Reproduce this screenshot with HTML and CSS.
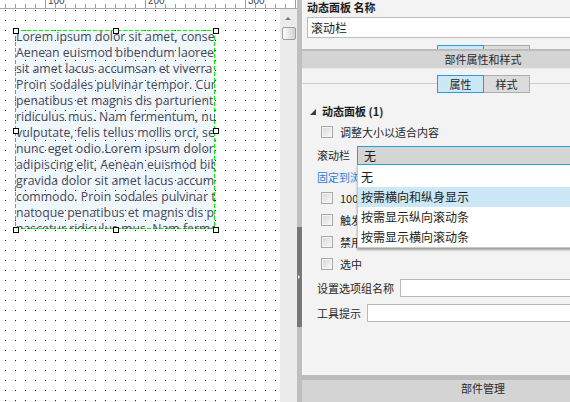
FILE: index.html
```html
<!DOCTYPE html>
<html lang="zh-CN">
<head>
<meta charset="utf-8">
<title>动态面板</title>
<link rel="stylesheet" href="styles.css">
</head>
<body>
<div class="app">
  <div class="design">
    <svg class="ruler" width="297" height="9" viewBox="0 0 297 9">
      <rect width="297" height="9" fill="#fff"/>
      <path d="M0 8.5H297" stroke="#a9a9a9"/>
      <path d="M5.5 4V8M15.5 4V8M25.5 4V8M35.5 4V8M55.5 4V8M65.5 4V8M75.5 4V8M85.5 4V8M95.5 4V8M105.5 4V8M115.5 4V8M125.5 4V8M135.5 4V8M155.5 4V8M165.5 4V8M175.5 4V8M185.5 4V8M195.5 4V8M205.5 4V8M215.5 4V8M225.5 4V8M235.5 4V8M255.5 4V8M265.5 4V8M275.5 4V8M285.5 4V8M295.5 0V8" stroke="#9d9d9d"/>
      <path d="M45.5 0V8M145.5 0V8M245.5 0V8" stroke="#9d9d9d"/>
      <text x="48" y="4" class="ruler-num">100</text>
      <text x="148" y="4" class="ruler-num">200</text>
      <text x="248" y="4" class="ruler-num">300</text>
    </svg>
    <div class="design-main">
      <div class="canvas">
        <div class="widget">
          <div class="widget-text">
            <div class="line">Lorem ipsum dolor sit amet, consectetur adipiscing elit.</div>
            <div class="line">Aenean euismod bibendum laoreet. Proin gravida dolor</div>
            <div class="line">sit amet lacus accumsan et viverra justo commodo.</div>
            <div class="line">Proin sodales pulvinar tempor. Cum sociis natoque</div>
            <div class="line">penatibus et magnis dis parturient montes, nascetur</div>
            <div class="line">ridiculus mus. Nam fermentum, nulla luctus pharetra</div>
            <div class="line">vulputate, felis tellus mollis orci, sed rhoncus sapien,</div>
            <div class="line">nunc eget odio.Lorem ipsum dolor sit amet, consectetur</div>
            <div class="line">adipiscing elit, Aenean euismod bibendum laoreet. Proin</div>
            <div class="line">gravida dolor sit amet lacus accumsan et viverra justo</div>
            <div class="line">commodo. Proin sodales pulvinar tempor. Cum sociis</div>
            <div class="line">natoque penatibus et magnis dis parturient montes,</div>
            <div class="line">nascetur ridiculus mus. Nam fermentum, nulla luctus</div>
          </div>
          <span class="handle hx0 hy0"></span>
          <span class="handle hx1 hy0"></span>
          <span class="handle hx2 hy0"></span>
          <span class="handle hx0 hy1"></span>
          <span class="handle hx2 hy1"></span>
          <span class="handle hx0 hy2"></span>
          <span class="handle hx1 hy2"></span>
          <span class="handle hx2 hy2"></span>
        </div>
      </div>
      <div class="vscroll">
        <span class="vs-up"></span>
        <span class="vs-thumb"></span>
      </div>
    </div>
  </div>
  <div class="splitter"><span class="sp-grip"></span></div>
  <div class="panel">
    <div class="panel-top">
      <div class="name-label">动态面板 名称</div>
      <div class="name-input">滚动栏</div>
      <div class="ghost-tabs"><span class="gtab gtab-on"></span><span class="gtab"></span></div>
    </div>
    <div class="bar-sep"></div>
    <div class="bar">部件属性和样式</div>
    <div class="panel-body">
      <div class="tabs"><span class="tab tab-on">属性</span><span class="tab">样式</span></div>
      <div class="sec-head">
        <svg class="tri" width="6" height="6" viewBox="0 0 6 6"><polygon points="6,0 6,6 0,6" fill="#3c3c3c"/></svg>
        <span>动态面板 (1)</span>
      </div>
      <div class="cb-row"><span class="cb"></span><span>调整大小以适合内容</span></div>
      <div class="field-row scroll-row">
        <span class="lbl">滚动栏</span>
        <div class="select-wrap">
          <div class="select">无</div>
          <ul class="dropdown">
            <li>无</li>
            <li class="hl">按需横向和纵身显示</li>
            <li>按需显示纵向滚动条</li>
            <li>按需显示横向滚动条</li>
          </ul>
        </div>
      </div>
      <div class="link-row"><span class="link">固定到浏览器</span></div>
      <div class="cb-row"><span class="cb"></span><span>100%宽度(仅限浏览器中有效)</span></div>
      <div class="cb-row"><span class="cb"></span><span>触发鼠标交互样式</span></div>
      <div class="cb-row"><span class="cb"></span><span>禁用</span></div>
      <div class="cb-row"><span class="cb"></span><span>选中</span></div>
      <div class="field-row group-row"><span class="lbl">设置选项组名称</span><span class="input"></span></div>
      <div class="field-row tip-row"><span class="lbl">工具提示</span><span class="input"></span></div>
    </div>
    <div class="bar-sep bottom-sep"></div>
    <div class="bar bottom-bar">部件管理</div>
  </div>
</div>
</body>
</html>
```

FILE: styles.css
```css
* { box-sizing: border-box; }
html, body { margin: 0; padding: 0; }
body {
  width: 570px;
  height: 402px;
  overflow: hidden;
  background: #fff;
  font-family: "Noto Sans CJK SC", "Noto Sans", sans-serif;
  font-size: 11px;
  color: #262626;
}
.app { display: flex; width: 570px; height: 402px; }

/* design area */
.design { flex: 0 0 297px; display: flex; flex-direction: column; }
.ruler { display: block; flex: 0 0 9px; }
.ruler-num { font-family: "Liberation Sans", sans-serif; font-size: 10px; fill: #444; }
.design-main { flex: 1; display: flex; min-height: 0; }
.canvas {
  flex: 0 0 280px;
  overflow: hidden;
  background-color: #fff;
  background-image: conic-gradient(from 270deg at 1px 1px, #0000ff 90deg, transparent 0deg);
  background-size: 10px 10px;
  background-position: 5px 1px;
  padding: 21px 0 0 15px;
}
.widget {
  position: relative;
  width: 200px;
  height: 199px;
  background:
    repeating-linear-gradient(90deg, #00f000 0 4px, transparent 4px 6px) 0 0 / 100% 1px no-repeat,
    repeating-linear-gradient(90deg, #00f000 0 4px, transparent 4px 6px) 0 100% / 100% 1px no-repeat,
    repeating-linear-gradient(180deg, #00f000 0 4px, transparent 4px 6px) 0 0 / 1px 100% no-repeat,
    repeating-linear-gradient(180deg, #00f000 0 4px, transparent 4px 6px) 100% 0 / 1px 100% no-repeat,
    rgba(100, 180, 210, 0.1);
}
.widget-text {
  height: 100%;
  overflow: hidden;
  padding-left: 1px;
  font-family: "Open Sans", "Noto Sans", sans-serif;
  font-size: 12.3px;
  line-height: 16px;
  color: #48485a;
}
.widget-text .line { white-space: nowrap; }
.widget-text .line:first-child { margin-top: -1px; }
.handle {
  position: absolute;
  width: 6px;
  height: 6px;
  border: 1px solid #000;
  background: #fff;
}
.hx0 { left: -2px; }
.hx1 { left: 98px; }
.hx2 { left: 198px; }
.hy0 { top: -2px; }
.hy1 { top: 98px; }
.hy2 { top: 197px; }

.vscroll {
  flex: 0 0 17px;
  background: #ececec;
  display: flex;
  flex-direction: column;
  align-items: flex-start;
}
.vs-up {
  margin-top: 8px;
  margin-left: 5px;
  width: 0;
  height: 0;
  border-style: solid;
  border-width: 0 3px 3px 3px;
  border-color: transparent transparent #7b7b7b transparent;
}
.vs-thumb {
  margin-top: 7px;
  margin-left: 2px;
  width: 14px;
  height: 13px;
  border: 1px solid #9c9c9c;
  border-radius: 2px;
  background: linear-gradient(90deg, #fdfdfd, #d2d2d2);
}

/* splitter */
.splitter { flex: 0 0 5px; background: #bfbfbf; display: flex; flex-direction: column; }
.sp-grip {
  margin-top: 227px;
  height: 100px;
  background: #777;
  display: flex;
  align-items: center;
  padding-left: 1px;
}
.sp-grip::before {
  content: "";
  width: 0;
  height: 0;
  border-left: 2px solid #fff;
  border-top: 2px solid transparent;
  border-bottom: 2px solid transparent;
}

/* panel */
.panel {
  flex: 0 0 362px;
  display: flex;
  flex-direction: column;
  background: #f3f3f3;
  box-shadow: inset 1px 0 #fbfbfb;
}
.panel-top { height: 49px; padding: 0 6px 0 5px; }
.name-label { height: 15px; line-height: 15px; font-weight: bold; color: #1c1c1c; }
.name-input {
  margin-top: 2px;
  height: 21px;
  background: #fff;
  border: 1px solid #bcbcbc;
  font-size: 12px;
  line-height: 19px;
  padding-left: 3px;
  color: #1c1c1c;
}
.ghost-tabs { display: flex; margin-top: 7px; margin-left: 130px; }
.gtab {
  width: 46px;
  height: 4px;
  border: 1px solid #adadad;
  border-bottom: 0;
  background: #dcdcdc;
}
.gtab-on { width: 47px; border-color: #2a9ad8; background: #cbe8f6; }
.gtab + .gtab { border-left: 0; }

.bar-sep { flex: 0 0 2px; background: #bcbcbc; }
.bar {
  flex: 0 0 18px;
  line-height: 17px;
  background: #d4d4d4;
  text-align: center;
  color: #2a2a2a;
  border-bottom: 1px solid #e9e9e9;
}
.panel-body { flex: 1; padding-top: 6px; position: relative; }
.tabs {
  display: flex;
  height: 18px;
  padding-left: 135px;
  background: linear-gradient(#cfcfcf, #cfcfcf) 0 8px / 100% 1px no-repeat;
}
.tab {
  width: 46px;
  height: 18px;
  border: 1px solid #adadad;
  background: #dcdcdc;
  text-align: center;
  line-height: 16px;
}
.tab-on { width: 47px; border-color: #2a9ad8; background: #cbe8f6; }
.tab + .tab { border-left: 0; }

.sec-head {
  margin-top: 8px;
  height: 20px;
  display: flex;
  align-items: center;
  padding-left: 8px;
  font-weight: bold;
  color: #1c1c1c;
}
.tri { display: block; margin-right: 6px; margin-top: 2px; }
.cb-row { height: 22px; display: flex; align-items: center; padding-left: 19px; white-space: nowrap; }
.cb {
  flex: 0 0 12px;
  width: 12px;
  height: 12px;
  margin-right: 7px;
  border: 1px solid #a9a9a9;
  background: linear-gradient(135deg, #d6d6d6, #fbfbfb);
  box-shadow: inset 0 0 0 1px #f4f4f4;
}
.field-row { height: 22px; display: flex; align-items: center; padding-left: 15px; padding-right: 6px; }
.scroll-row { margin-top: 1px; }
.group-row { margin-top: 2px; }
.tip-row { margin-top: 3px; }
.lbl { white-space: nowrap; }
.select-wrap { position: relative; flex: 1; margin-left: 7px; }
.select {
  height: 19px;
  border: 1px solid #26a0da;
  background: #d5d5d5;
  font-size: 12px;
  line-height: 17px;
  padding-left: 6px;
  color: #1c1c1c;
}
.dropdown {
  position: absolute;
  top: 100%;
  left: 0;
  right: 0;
  margin: 0;
  padding: 2px 0 0;
  list-style: none;
  background: #fff;
  border: 1px solid #c9c9c9;
  border-top: 0;
  box-shadow: 0 2px 2px rgba(0, 0, 0, 0.35);
  font-size: 12px;
  color: #1c1c1c;
}
.dropdown li { height: 20px; line-height: 20px; padding-left: 3px; white-space: nowrap; }
.dropdown li.hl { background: #cce8f6; }
.link-row { height: 21px; display: flex; align-items: center; padding-left: 15px; }
.link { color: #2c80d3; white-space: nowrap; }
.input {
  flex: 1;
  height: 18px;
  margin-left: 6px;
  background: #fff;
  border: 1px solid #b8b8b8;
}
.bottom-sep { flex-basis: 5px; }
.bottom-bar { flex: 0 0 22px; border-bottom: 0; }
```
